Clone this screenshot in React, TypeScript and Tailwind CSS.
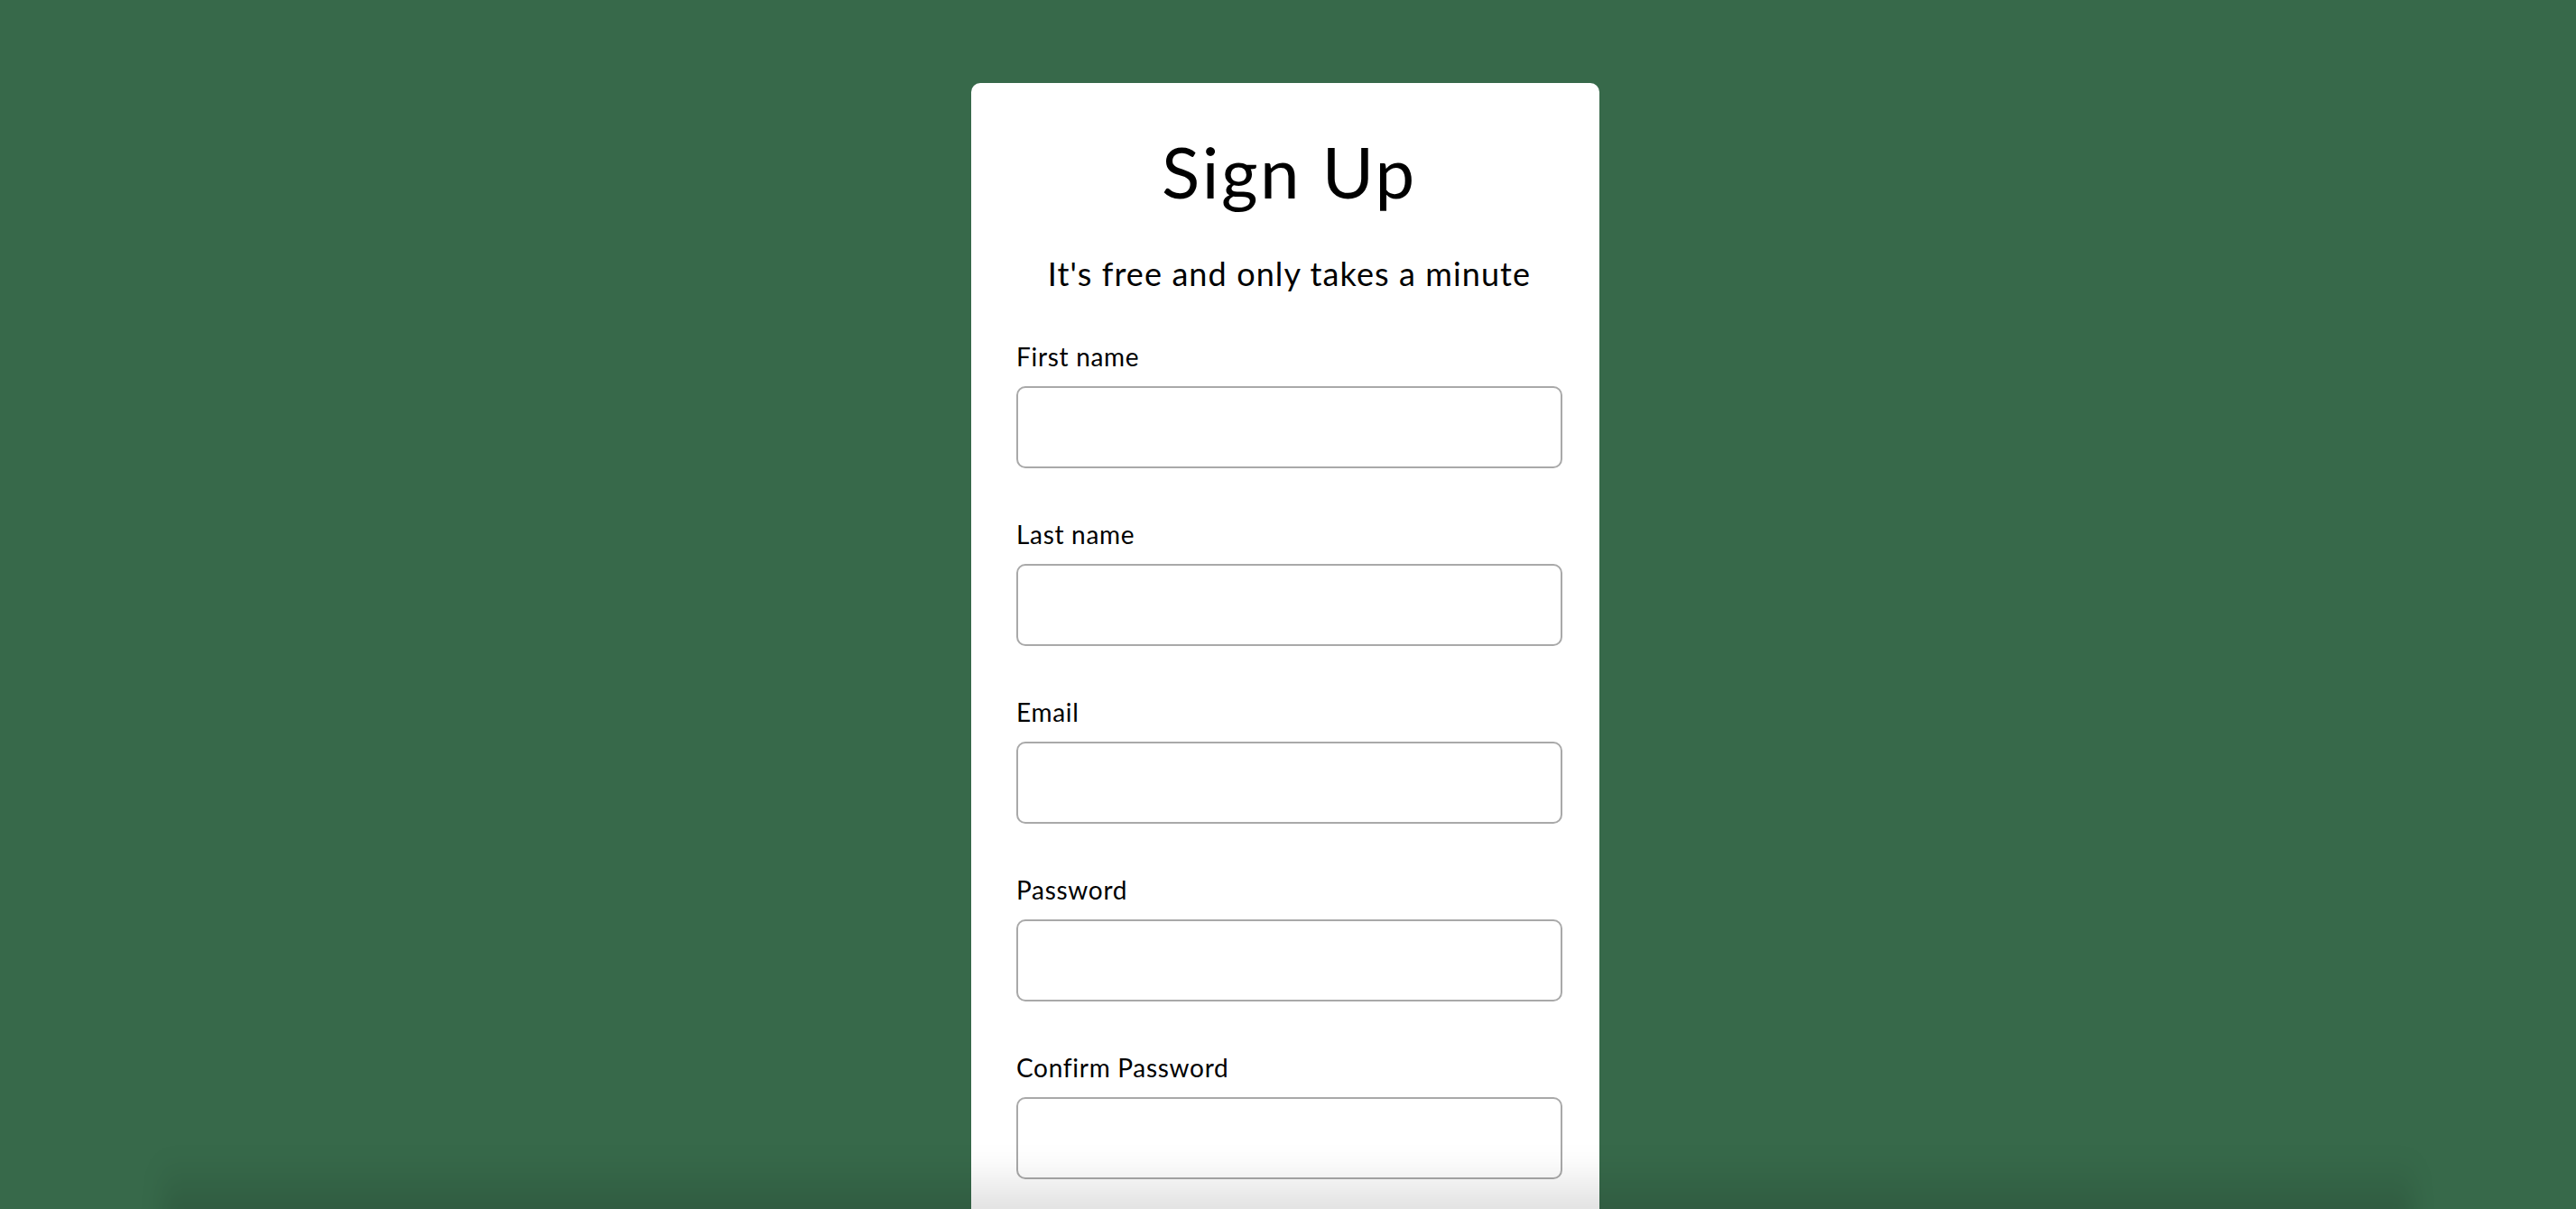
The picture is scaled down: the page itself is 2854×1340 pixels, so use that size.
const fields = ["First name", "Last name", "Email", "Password", "Confirm Password"];

export default function App() {
  return (
    <div
      className="relative h-[1340px] overflow-hidden bg-[#37694a]"
      style={{ fontFamily: "Lato, 'Open Sans', sans-serif" }}
    >
      <div className="pt-[92px]">
        {/* ── Card ── */}
        <div className="ml-[1076px] w-[696px] rounded-[10px] bg-white pl-[50px] pr-[41px] pt-[58px] pb-20 text-black">
          <h1 className="text-center text-[78px] leading-[80px] font-normal tracking-[2.6px]">
            Sign Up
          </h1>
          <p className="mt-[53px] text-center text-[36px] leading-[40px] tracking-[1.1px]">
            It's free and only takes a minute
          </p>

          <form className="mt-[56px] flex flex-col gap-[57px]">
            {fields.map((label) => (
              <label key={label} className="flex flex-col">
                <span className="text-[28px] leading-[32px] tracking-[0.7px]">{label}</span>
                <input
                  type={label.includes("Password") ? "password" : "text"}
                  className="mt-[17px] h-[91px] w-full rounded-[10px] border-2 border-[#a9a9a9] bg-white px-4 text-[28px] outline-none"
                />
              </label>
            ))}
          </form>
        </div>
      </div>

      {/* bottom fade */}
      <div className="pointer-events-none absolute inset-x-[180px] -bottom-[20px] h-[80px] bg-gradient-to-b from-transparent to-black/15 blur-md" />
    </div>
  );
}
